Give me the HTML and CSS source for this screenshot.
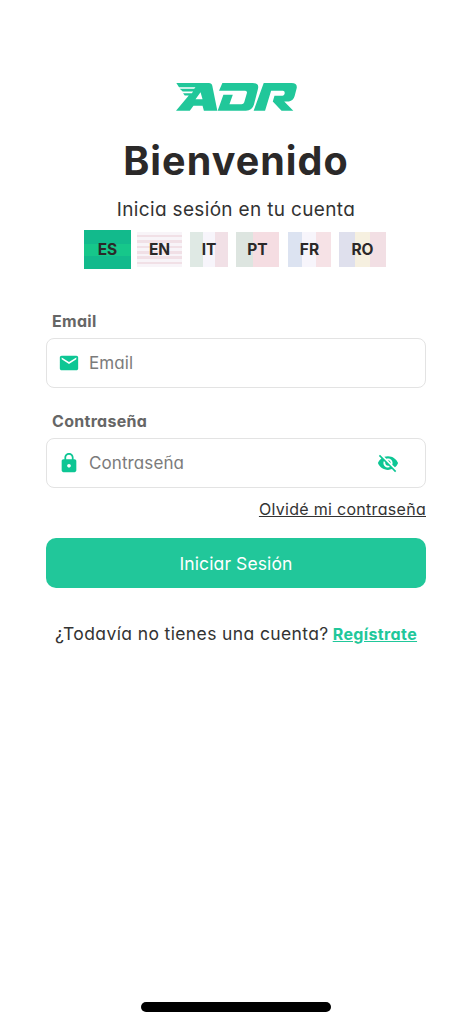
FILE: index.html
```html
<!DOCTYPE html>
<html lang="es">
<head>
<meta charset="utf-8">
<title>ADR – Iniciar sesión</title>
<link rel="stylesheet" href="styles.css">
</head>
<body>
<main class="screen">
  <svg class="logo" viewBox="36 40 360 79" preserveAspectRatio="none" role="img" aria-label="ADR">
    <path d="M37 40H134Q142 40 144 48L159 118H119L115 104H88L77 118H36L74 75H62L57 69H83L87 64H56L47 56H90L94 52H45ZM109 66L94 86H115Z" fill-rule="evenodd"/>
    <path d="M174 40H264Q284 40 280 56L268 101Q263 118 244 118H160L177 73H205L195 100H231Q237 100 239 94L247 68Q248 62 242 62H164Z"/>
    <path d="M297 40H380Q398 40 395 55L389 77Q385 91 372 92H358L385 118H350L324 92L329 76H353Q357 76 359 71Q361 62 354 62H319L301 118H267Z"/>
  </svg>
  <h1 class="title">Bienvenido</h1>
  <p class="subtitle">Inicia sesión en tu cuenta</p>
  <nav class="langs">
    <button class="lang es">ES</button>
    <button class="lang en">EN</button>
    <button class="lang it">IT</button>
    <button class="lang pt">PT</button>
    <button class="lang fr">FR</button>
    <button class="lang ro">RO</button>
  </nav>
  <form class="form">
    <label class="label label-email">Email</label>
    <div class="field">
      <svg class="icon" viewBox="0 0 24 24"><path d="M20 4H4c-1.100 0-2 .9-2 2v12c0 1.100.9 2 2 2h16c1.100 0 2-.9 2-2V6c0-1.100-.9-2-2-2zm0 4l-8 5-8-5V6l8 5 8-5v2z"/></svg>
      <span class="placeholder ph-email">Email</span>
    </div>
    <label class="label label-pass">Contraseña</label>
    <div class="field">
      <svg class="icon" viewBox="0 0 24 24"><path d="M18 8h-1V6c0-2.760-2.240-5-5-5S7 3.240 7 6v2H6c-1.100 0-2 .9-2 2v10c0 1.100.9 2 2 2h12c1.100 0 2-.9 2-2V10c0-1.100-.9-2-2-2zm-6 9c-1.100 0-2-.9-2-2s.9-2 2-2 2 .9 2 2-.9 2-2 2zm3.100-9H8.900V6c0-1.710 1.390-3.100 3.100-3.100s3.100 1.390 3.100 3.100v2z"/></svg>
      <span class="placeholder ph-pass">Contraseña</span>
      <svg class="icon eye" viewBox="0 0 24 24"><path d="M12 7c2.760 0 5 2.240 5 5 0 .65-.13 1.260-.36 1.830l2.920 2.920c1.510-1.260 2.700-2.890 3.430-4.750-1.730-4.390-6-7.500-11-7.500-1.400 0-2.740.25-3.980.7l2.160 2.160C10.740 7.130 11.350 7 12 7zM2 4.270l2.280 2.280.46.46C3.080 8.300 1.780 10.020 1 12c1.730 4.390 6 7.500 11 7.500 1.550 0 3.030-.3 4.380-.84l.42.42L19.730 22 21 20.730 3.270 3 2 4.270zM7.530 9.800l1.550 1.550c-.05.21-.08.43-.08.65 0 1.660 1.340 3 3 3 .22 0 .44-.03.65-.08l1.550 1.550c-.67.33-1.410.53-2.200.53-2.760 0-5-2.240-5-5 0-.79.2-1.530.53-2.200zm4.310-.78l3.150 3.150.02-.16c0-1.660-1.340-3-3-3l-.17.01z"/></svg>
    </div>
    <a class="forgot">Olvidé mi contraseña</a>
    <button type="button" class="submit">Iniciar Sesión</button>
  </form>
  <p class="register"><span class="ask">¿Todavía no tienes una cuenta?</span><a class="signup">Regístrate</a></p>
  <div class="home-bar"></div>
</main>
</body>
</html>
```
FILE: styles.css
```css
* { box-sizing: border-box; margin: 0; padding: 0; }
body {
  background: #fff;
  color: #2b2929;
  font-family: Inter, "Open Sans", sans-serif;
  font-feature-settings: "cv11";
}
button { font: inherit; font-feature-settings: inherit; color: inherit; border: 0; }
.screen {
  width: 472px;
  height: 1024px;
  padding: 83px 46px 12px;
  display: flex;
  flex-direction: column;
  align-items: center;
  white-space: nowrap;
}
.logo { width: 121px; height: 28px; fill: #21c79a; flex: none; }
.title { margin-top: 25px; height: 50px; line-height: 50px; font-size: 39.500px; font-weight: 750; letter-spacing: 1.050px; }
.subtitle { margin-top: 9px; height: 30px; line-height: 30px; font-size: 19px; letter-spacing: 0.34px; color: #333; }
.langs { display: flex; align-items: center; margin: 4px 2px 0 0; height: 40px; width: 302px; gap: 8px; }
.lang { height: 35px; font-size: 15.500px; font-weight: 700; }
.es { width: 47px; height: 39px; margin-right: -2px; background: linear-gradient(#12ba8c 35%, #16c78a 35% 66%, #12ba8c 66%); }
.en { width: 45px; background: repeating-linear-gradient(#f8f4f8 0 2.700px, #f1e0e6 2.700px 5.400px); }
.it { width: 38px; background: linear-gradient(90deg, #dfe9e4 33%, #f7f5fb 33% 66%, #f1e0e6 66%); }
.pt { width: 43px; margin-right: 1px; background: linear-gradient(90deg, #dde5e0 39%, #f5dde2 39%); }
.fr { width: 43px; background: linear-gradient(90deg, #dce3f1 33%, #f7f5fb 33% 66%, #f6e2e6 66%); }
.ro { width: 47px; background: linear-gradient(90deg, #dfe0ed 33%, #f6f0e0 33% 66%, #f2dfe4 66%); }
.form { width: 380px; margin-top: 40px; display: flex; flex-direction: column; }
.label { height: 24px; line-height: 24px; padding-left: 6px; font-size: 16px; font-weight: 700; letter-spacing: 0.3px; color: #666; }
.label-email { margin-bottom: 4.500px; }
.label-pass { margin: 21.500px 0 4.500px; }
.field { height: 50px; border: 1px solid #e3e3e3; border-radius: 8px; display: flex; align-items: center; padding: 0 26px 0 11px; }
.icon { width: 22px; height: 22px; fill: #0dc694; flex: none; }
.eye { margin-left: auto; }
.placeholder { margin-left: 9px; font-size: 17px; letter-spacing: 0.1px; color: #7b7b7b; }
.forgot { align-self: flex-end; margin-top: 9.500px; height: 24px; line-height: 24px; font-size: 16px; letter-spacing: 0.3px; color: #333; text-decoration: underline; }
.submit { margin-top: 17px; height: 50px; border-radius: 10px; background: #21c79a; color: #fff; font-size: 17.500px; letter-spacing: 0.1px; }
.register { margin-top: 33px; height: 26px; display: flex; align-items: baseline; gap: 4px; line-height: 26px; font-size: 17.500px; }
.ask { letter-spacing: 0.38px; color: #333; }
.signup { color: #21c79a; font-size: 16px; font-weight: 700; letter-spacing: 0.38px; text-decoration: underline; }
.home-bar { margin-top: auto; width: 190px; height: 10px; border-radius: 5px; background: #000; flex: none; }
```
